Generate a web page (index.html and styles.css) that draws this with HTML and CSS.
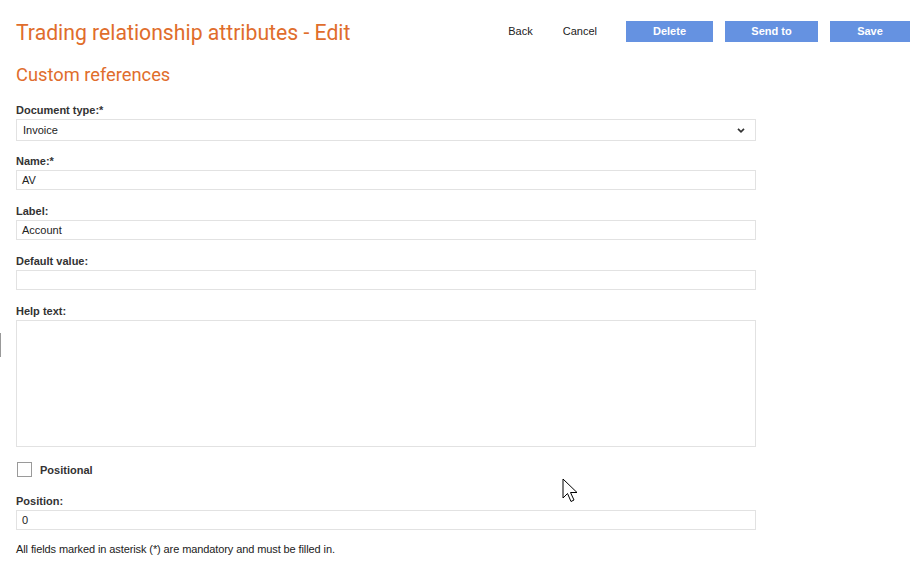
FILE: index.html
```html
<!DOCTYPE html>
<html>
<head>
<meta charset="utf-8">
<link rel="stylesheet" href="styles.css">
</head>
<body>
<div class="page">
  <header class="topbar">
    <h1 class="title">Trading relationship attributes - Edit</h1>
    <div class="actions">
      <a class="link">Back</a>
      <a class="link">Cancel</a>
      <button class="btn btn-delete">Delete</button>
      <button class="btn btn-send">Send to</button>
      <button class="btn btn-save">Save</button>
    </div>
  </header>
  <h2 class="subtitle">Custom references</h2>
  <form class="form">
    <div class="field field-select">
      <label class="label">Document type:*</label>
      <div class="select">
        <span>Invoice</span>
        <svg class="chev" width="8" height="5" viewBox="0 0 8 5"><path d="M1 0.8 L4 3.8 L7 0.8" fill="none" stroke="#333" stroke-width="1.7"/></svg>
      </div>
    </div>
    <div class="field">
      <label class="label">Name:*</label>
      <div class="input">AV</div>
    </div>
    <div class="field">
      <label class="label">Label:</label>
      <div class="input">Account</div>
    </div>
    <div class="field">
      <label class="label">Default value:</label>
      <div class="input"></div>
    </div>
    <div class="field">
      <label class="label">Help text:</label>
      <div class="textarea"></div>
    </div>
    <div class="check-row">
      <span class="checkbox"></span>
      <span class="check-label">Positional</span>
    </div>
    <div class="field">
      <label class="label">Position:</label>
      <div class="input">0</div>
    </div>
    <p class="note">All fields marked in asterisk (*) are mandatory and must be filled in.</p>
  </form>
</div>
<div class="edge-line"></div>
<svg class="cursor" width="18" height="27" viewBox="0 0 18 27"><path d="M1 1 L1 20 L5.5 15.5 L9 23.5 L12 22 L8.5 14.5 L15 14.5 Z" fill="#fff" stroke="#000" stroke-width="1" stroke-linejoin="miter"/></svg>
</body>
</html>
```
FILE: styles.css
```css
html, body {
  margin: 0;
  padding: 0;
  background: #fff;
}
body {
  font-family: "Liberation Sans", Arial, sans-serif;
  font-size: 11px;
  color: #222;
  width: 918px;
  height: 561px;
  overflow: hidden;
  position: relative;
}
.page {
  padding: 0 8px 0 16px;
}
.topbar {
  display: flex;
  align-items: center;
  justify-content: space-between;
  height: 42px;
  padding-top: 10px;
}
.title {
  margin: 0;
  margin-top: 2px;
  font-family: Roboto, "Noto Sans", sans-serif;
  font-weight: 400;
  font-size: 21.2px;
  color: #e06d2c;
}
.actions {
  display: flex;
  align-items: center;
  height: 21px;
}
.link {
  color: #222;
  font-size: 11px;
  margin-right: 30px;
}
.link:first-child {
  margin-left: 1px;
}
.link + .link {
  margin-right: 29px;
}
.btn {
  border: 0;
  background: #6592e1;
  color: #fff;
  font-family: "Liberation Sans", Arial, sans-serif;
  font-weight: 700;
  font-size: 11px;
  height: 21px;
  padding: 0;
  margin-left: 12px;
}
.btn-delete { width: 87px; margin-left: 0; }
.btn-send { width: 93px; }
.btn-save { width: 80px; }
.subtitle {
  margin: 11px 0 0;
  font-family: Roboto, "Noto Sans", sans-serif;
  font-weight: 400;
  font-size: 18.3px;
  line-height: 24px;
  color: #e06d2c;
}
.form {
  width: 740px;
  margin-top: 14px;
}
.field {
  margin-bottom: 13px;
}
.field-select {
  padding-top: 1px;
  margin-bottom: 12px;
}
.label {
  display: block;
  font-weight: 700;
  font-size: 11px;
  line-height: 14px;
  color: #333;
  padding-top: 1px;
  margin-bottom: 2px;
}
.select, .input, .textarea {
  box-sizing: border-box;
  border: 1px solid #e2e2e2;
  background: #fff;
  width: 740px;
  font-size: 11px;
  color: #222;
}
.select {
  height: 22px;
  display: flex;
  align-items: center;
  justify-content: space-between;
  padding: 0 10px 0 6px;
}
.chev { display: block; }
.input {
  height: 20px;
  line-height: 18px;
  padding: 0 5px;
}
.textarea {
  height: 127px;
}
.check-row {
  display: flex;
  align-items: center;
  margin-top: 15px;
  height: 15px;
}
.checkbox {
  box-sizing: border-box;
  width: 15px;
  height: 15px;
  border: 1px solid #9a9a9a;
  background: #fff;
  margin-left: 1px;
}
.check-label {
  font-weight: 700;
  margin-left: 8px;
  color: #333;
}
.check-row + .field {
  margin-top: 16px;
}
.note {
  margin: 0;
  margin-top: 5px;
  font-size: 11px;
  letter-spacing: -0.1px;
  color: #222;
}
.edge-line {
  position: absolute;
  left: 0;
  top: 333px;
  width: 1px;
  height: 24px;
  background: #999;
}
.cursor {
  position: absolute;
  left: 562px;
  top: 478px;
}
```
